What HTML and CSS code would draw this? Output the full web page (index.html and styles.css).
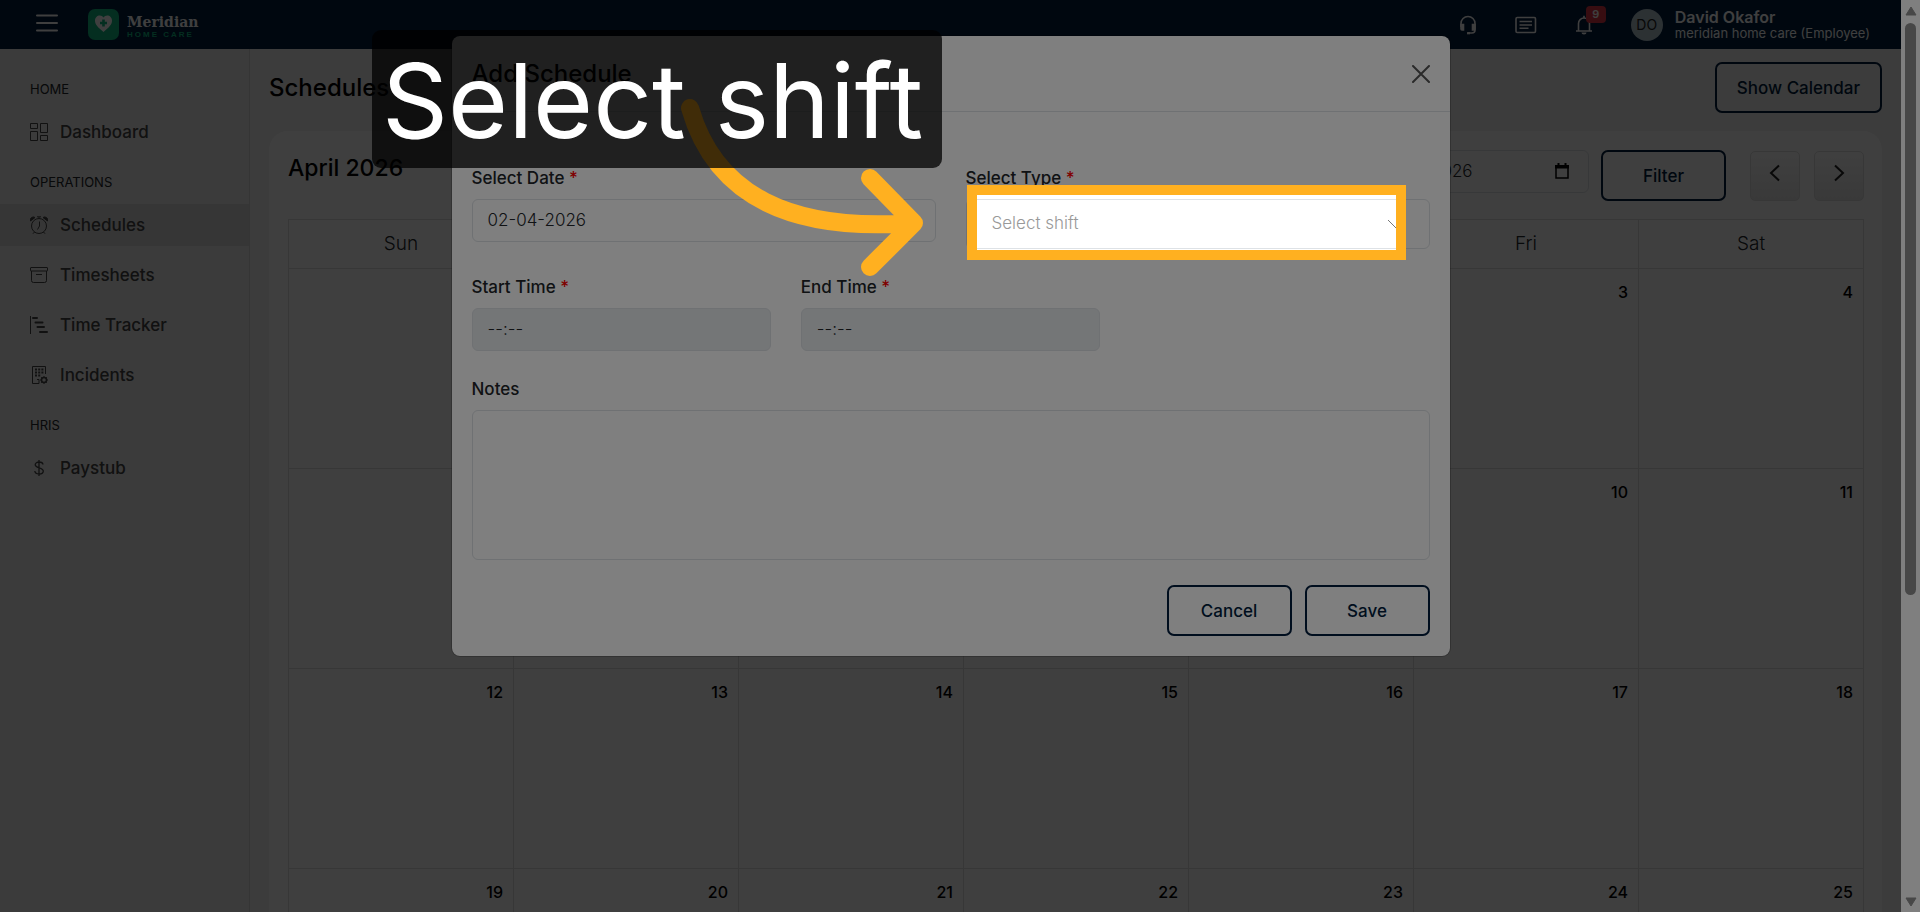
FILE: index.html
```html
<!DOCTYPE html>
<html lang="en">
  <head>
    <meta charset="UTF-8" />
    <meta name="viewport" content="width=device-width, initial-scale=1.0" />
    <title>Schedules</title>
    <link rel="stylesheet" href="styles.css">
  </head>
  <body>
    <div class="app">
      <!-- Top bar -->
      <header class="topbar">
        <button type="button" class="menu-button" aria-label="Menu">
          <svg width="22" height="18" viewBox="0 0 22 18"><path d="M1 1.5h20M1 9h20M1 16.5h20" stroke="#fff" stroke-width="2" stroke-linecap="round"/></svg>
        </button>
        <div class="logo">
          <svg width="31" height="31" viewBox="0 0 31 31">
            <rect width="31" height="31" rx="7" fill="#10b981"/>
            <path d="M15.500 23C10 18.500 7 15.500 7 11.800C7 8.500 9.200 6.500 11.800 6.500c1.600 0 2.900.8 3.700 1.900c.8-1.100 2.100-1.900 3.700-1.900c2.600 0 4.800 2 4.800 5.300c0 3.700-3 6.700-8.500 11.200z" fill="#fff"/>
            <path d="M15.500 10.500v7M12 14h7" stroke="#10b981" stroke-width="2.600"/>
          </svg>
          <div class="logo-text">
            <span class="logo-name">Meridian</span>
            <span class="logo-sub">HOME CARE</span>
          </div>
        </div>
        <div class="topbar-right">
          <svg class="icon-headset" width="18" height="20" viewBox="0 0 18 20" fill="none" stroke="#fff" stroke-width="1.600">
            <path d="M2 12V8.500a7 7 0 0 1 14 0V15q0 3-3 3H9"/>
            <path d="M2 9.500h2.500v5.500H3a1 1 0 0 1-1-1zM16 9.500h-2.500v5.500H15a1 1 0 0 0 1-1z" fill="#fff"/>
            <path d="M8 18.200h3" stroke-width="2.200"/>
          </svg>
          <svg class="icon-list" width="22" height="18" viewBox="0 0 22 18" fill="none" stroke="#fff" stroke-width="1.600">
            <rect x="1" y="1.500" width="19.500" height="15" rx="1.200"/>
            <path d="M4.500 5.500h12.500M4.500 9h12.500M4.500 12.300h9"/>
          </svg>
          <div class="bell">
            <svg width="18" height="20" viewBox="0 0 18 20" fill="none" stroke="#fff" stroke-width="1.600">
              <path d="M1 16h16M3.500 16V8.500a5.500 5.500 0 0 1 11 0V16M9 3V.8"/>
              <path d="M6.500 17.500h5a2.500 2 0 0 1-5 0z" fill="#fff" stroke="none"/>
            </svg>
            <span class="badge">9</span>
          </div>
          <div class="avatar">DO</div>
          <div class="user">
            <strong>David Okafor</strong>
            <span>meridian home care (Employee)</span>
          </div>
        </div>
      </header>

      <div class="main">
        <nav class="sidebar">
          <h3>HOME</h3>
          <a href="#">
            <svg width="18" height="18" viewBox="0 0 18 18" fill="none" stroke="currentColor"><path d="M.5.500h7v5h-7zM10.500.500h7v9h-7zM.5 8.500h7v9h-7zM10.500 12.500h7v5h-7z"/></svg>
            Dashboard
          </a>
          <h3>OPERATIONS</h3>
          <a href="#" class="active">
            <svg width="18" height="18" viewBox="0 0 18 18" fill="none" stroke="currentColor"><circle cx="9" cy="10" r="7.500"/><path d="M9.500 5.500V10L7.500 13.500M7 .8h4M9 1v1.500M4.500 16l-1.500 1.700M13.500 16l1.500 1.700"/><path d="M.5 5A3 3 0 0 1 5 1.500zM17.500 5A3 3 0 0 0 13 1.500z" fill="currentColor"/></svg>
            Schedules
          </a>
          <a href="#">
            <svg width="18" height="18" viewBox="0 0 18 18" fill="none" stroke="currentColor"><rect x=".5" y="1.500" width="17" height="3.500" rx=".5"/><path d="M1.500 5v9.500a2 2 0 0 0 2 2h11a2 2 0 0 0 2-2V5M6 8.500h6"/></svg>
            Timesheets
          </a>
          <a href="#">
            <svg width="18" height="18" viewBox="0 0 18 18" fill="none" stroke="currentColor"><path d="M.5 0v18"/><path d="M3 2h4M5.500 6.500h7M7.500 11h6.500M10 16h7" stroke-width="2" stroke-linecap="round"/></svg>
            Time Tracker
          </a>
          <a href="#">
            <svg width="18" height="18" viewBox="0 0 18 18" fill="none" stroke="currentColor"><path d="M15.500 8V.500h-13v17h6.500v-4H7"/><path d="M5 3.500h8.500M5 6.500h8.500M5 9.500h6" stroke-width="2" stroke-dasharray="2 1.200"/><circle cx="14" cy="14" r="2.500" stroke-width="1.500"/><path d="M14 10v1.500M14 16.500V18M10 14h1.500M16.500 14H18M11.200 11.200l1 1M15.800 15.800l1 1M16.800 11.200l-1 1M12.200 15.800l-1 1"/></svg>
            Incidents
          </a>
          <h3>HRIS</h3>
          <a href="#">
            <svg width="18" height="18" viewBox="0 0 18 18" fill="none" stroke="currentColor" stroke-width="1.300"><path d="M9 1v16M13 5.500C12.800 4 11.300 3 9.200 3S5.200 4.200 5.200 5.800C5.200 9.500 13.300 8 13.300 12c0 1.700-1.700 3-4.200 3S5 13.800 4.800 12"/></svg>
            Paystub
          </a>
        </nav>

        <div class="content">
          <div class="page-head">
            <h1>Schedules</h1>
            <button type="button" class="button">Show Calendar</button>
          </div>

          <div class="card">
            <div class="card-head">
              <h2>April 2026</h2>
              <div class="filters">
                <div class="date-filter">
                  <input type="text" class="input" aria-label="Date" value="02-04-2026" />
                  <svg width="14" height="16" viewBox="0 0 14 16"><path d="M1 3h12v12H1z" fill="none" stroke="#000" stroke-width="1.500"/><path d="M0 2h14v3.500H0zM2.500 0h2v2h-2zM9.500 0h2v2h-2z"/></svg>
                </div>
                <button type="button" class="button">Filter</button>
              </div>
              <div class="pager">
                <button type="button" aria-label="Previous"><svg width="12" height="18" viewBox="0 0 12 18"><path d="M10 1.500L2 9l8 7.500"/></svg></button>
                <button type="button" aria-label="Next"><svg width="12" height="18" viewBox="0 0 12 18"><path d="M2 1.500L10 9l-8 7.500"/></svg></button>
              </div>
            </div>

            <table class="calendar">
              <thead>
                <tr><th>Sun</th><th>Mon</th><th>Tue</th><th>Wed</th><th>Thu</th><th>Fri</th><th>Sat</th></tr>
              </thead>
              <tbody>
                <tr><td></td><td></td><td></td><td>1</td><td>2</td><td>3</td><td>4</td></tr>
                <tr><td>5</td><td>6</td><td>7</td><td>8</td><td>9</td><td>10</td><td>11</td></tr>
                <tr><td>12</td><td>13</td><td>14</td><td>15</td><td>16</td><td>17</td><td>18</td></tr>
                <tr><td>19</td><td>20</td><td>21</td><td>22</td><td>23</td><td>24</td><td>25</td></tr>
              </tbody>
            </table>
          </div>
        </div>
      </div>

      <!-- Add Schedule modal -->
      <div class="backdrop">
        <form class="modal">
          <div class="modal-head">
            <h2>Add Schedule</h2>
            <button type="button" class="close" aria-label="Close">
              <svg width="18" height="18" viewBox="0 0 18 18"><path d="M1 1l16 16M17 1L1 17" stroke="#555" stroke-width="2" stroke-linecap="round"/></svg>
            </button>
          </div>
          <div class="modal-body">
            <div class="row two">
              <div class="field">
                <label for="date">Select Date <span>*</span></label>
                <input type="text" id="date" class="input" value="02-04-2026" />
              </div>
              <div class="field">
                <label for="type">Select Type <span>*</span></label>
                <div class="select">
                  <select id="type"><option>Select shift</option></select>
                  <svg width="18" height="10" viewBox="0 0 18 10"><path d="M1 1l8 8 8-8" fill="none" stroke="#777"/></svg>
                </div>
              </div>
            </div>
            <div class="row three">
              <div class="field">
                <label for="start">Start Time <span>*</span></label>
                <input type="text" id="start" class="input" value="--:--" disabled />
              </div>
              <div class="field">
                <label for="end">End Time <span>*</span></label>
                <input type="text" id="end" class="input" value="--:--" disabled />
              </div>
            </div>
            <div class="field">
              <label for="notes">Notes</label>
              <textarea id="notes" class="input"></textarea>
            </div>
          </div>
          <div class="modal-foot">
            <button type="button" class="button">Cancel</button>
            <button type="submit" class="button">Save</button>
          </div>
        </form>
      </div>
    </div>

    <div class="scrollbar">
      <svg width="12" height="10" viewBox="0 0 12 10"><path d="M6 1l5 8H1z" fill="#8f8f8f" stroke="#8f8f8f" stroke-linejoin="round"/></svg>
      <div class="track"><div class="thumb"></div></div>
      <svg width="12" height="10" viewBox="0 0 12 10"><path d="M6 9l5-8H1z" fill="#8f8f8f" stroke="#8f8f8f" stroke-linejoin="round"/></svg>
    </div>

    <!-- Guided tour step -->
    <div class="tour">
      <div class="spotlight"></div>
      <svg class="arrow" width="260" height="200" viewBox="670 90 260 200" fill="none" stroke="#ffb020" stroke-width="18" stroke-linecap="round" stroke-linejoin="round">
        <path d="M690 108C715 195 790 232 912 223M870 178L914 223L870 267"/>
      </svg>
      <div class="tour-text">Select shift</div>
    </div>
  </body>
</html>
```
FILE: styles.css
```css
* {
  box-sizing: border-box;
}

body {
  margin: 0;
  height: 100vh;
  display: flex;
  overflow: hidden;
  font-family: Inter, "Liberation Sans", sans-serif;
  font-size: 16px;
  line-height: 24px;
  color: #212529;
}

h1,
h2,
h3 {
  margin: 0;
  font-weight: 500;
}

h1,
h2 {
  font-size: 24px;
  line-height: 32px;
  color: #000;
}

button,
input,
select,
textarea {
  font: inherit;
  color: inherit;
}

button {
  cursor: pointer;
}

.app {
  position: relative;
  flex: 1;
  min-width: 0;
  display: flex;
  flex-direction: column;
  overflow: hidden;
}

/* Top bar */
.topbar {
  height: 49px;
  flex: none;
  display: flex;
  align-items: center;
  padding: 0 31px 0 36px;
  background-color: #001c3d;
  color: #fff;
}

.menu-button {
  display: flex;
  padding: 0 0 4px;
  border: none;
  background: none;
}

.logo {
  display: flex;
  align-items: center;
  gap: 8px;
  margin-left: 30px;
}

.logo-text {
  display: flex;
  flex-direction: column;
  padding-top: 4px;
}

.logo-name {
  font-family: "DejaVu Serif", serif;
  font-size: 14px;
  font-weight: bold;
  line-height: 16px;
}

.logo-sub {
  font-family: "Liberation Sans", sans-serif;
  font-size: 8px;
  font-weight: bold;
  line-height: 10px;
  letter-spacing: 2px;
  color: #10b981;
}

.topbar-right {
  display: flex;
  align-items: center;
  margin-left: auto;
}

.icon-list {
  margin: 0 38px;
}

.bell {
  position: relative;
  display: flex;
}

.badge {
  position: absolute;
  top: -9px;
  left: 11px;
  width: 20px;
  height: 17px;
  border-radius: 4px;
  background-color: #dc3545;
  font-size: 11px;
  font-weight: 600;
  line-height: 17px;
  text-align: center;
}

.avatar {
  width: 32px;
  height: 32px;
  margin: 0 12px 0 38px;
  border-radius: 50%;
  background-color: #b0c4ce;
  color: #222;
  font-size: 14px;
  line-height: 32px;
  text-align: center;
}

.user {
  display: flex;
  flex-direction: column;
  font-size: 13px;
  line-height: 16px;
}

.user strong {
  font-size: 16px;
  font-weight: 600;
}

.main {
  flex: 1;
  min-height: 0;
  display: flex;
}

/* Sidebar */
.sidebar {
  width: 250px;
  flex: none;
  padding-top: 19px;
  border-right: 1px solid #d4d4d4;
  background-color: #ececec;
}

.sidebar h3 {
  padding: 0 30px;
  font-size: 13px;
  font-weight: 400;
  line-height: 43px;
}

.sidebar a {
  height: 42px;
  display: flex;
  align-items: center;
  gap: 12px;
  margin-bottom: 8px;
  padding: 0 30px;
  font-size: 17px;
  font-weight: 500;
  color: #444;
  text-decoration: none;
}

.sidebar a.active {
  background-color: #dadada;
}

/* Page */
.content {
  flex: 1;
  min-width: 0;
  padding: 13px 19px;
  background-color: #f2f2f2;
  overflow: hidden;
}

.page-head {
  display: flex;
  align-items: center;
  justify-content: space-between;
}

.button {
  min-width: 125px;
  height: 51px;
  padding: 0 20px;
  border: 2px solid #001c3d;
  border-radius: 7px;
  background-color: transparent;
  color: #001c3d;
  font-size: 17px;
  font-weight: 500;
}

.card {
  margin-top: 18px;
  padding: 19px 18px 19px 19px;
  border-radius: 19px;
  background-color: #fff;
}

.card-head {
  display: flex;
  align-items: flex-start;
  margin-bottom: 18px;
}

.card-head h2 {
  margin-right: auto;
  padding-top: 2px;
  font-size: 23px;
}

.filters {
  display: flex;
  align-items: flex-start;
  gap: 12px;
  margin-right: 24px;
}

.date-filter {
  position: relative;
  width: 231px;
}

.date-filter svg {
  position: absolute;
  top: 13px;
  right: 20px;
}

.pager {
  display: flex;
  gap: 14px;
  padding-top: 1px;
}

.pager button {
  width: 50px;
  height: 50px;
  border: 1px solid #ddd;
  border-radius: 5px;
  background: linear-gradient(#fff, #e6e6e6);
}

.pager path {
  fill: none;
  stroke: #222;
  stroke-width: 2;
}

.calendar {
  width: 100%;
  table-layout: fixed;
  border-collapse: collapse;
}

.calendar th,
.calendar td {
  border: 1px solid #dcdcdc;
}

.calendar th {
  height: 49px;
  padding: 0;
  font-size: 19px;
  font-weight: 300;
}

.calendar td {
  height: 200px;
  padding: 11px 10px;
  color: #000;
  font-weight: 500;
  text-align: right;
  vertical-align: top;
}

/* Form controls */
.input {
  display: block;
  width: 100%;
  height: 43px;
  padding: 0 15px 2px;
  border: 1px solid #dee2e6;
  border-radius: 6px;
  background-color: #fff;
  font-size: 17px;
  font-weight: 300;
}

.input:disabled {
  background-color: #e9ecef;
}

textarea.input {
  height: 150px;
  padding: 10px 15px;
  resize: none;
}

/* Modal */
.backdrop {
  position: absolute;
  inset: 0;
  padding-top: 35px;
  background-color: rgba(0, 0, 0, 0.5);
}

.modal {
  max-width: 1000px;
  margin: 0 auto;
  border: 1px solid rgba(0, 0, 0, 0.2);
  border-radius: 9px;
  background-color: #fff;
  background-clip: padding-box;
}

.modal-head {
  height: 76px;
  display: flex;
  align-items: center;
  justify-content: space-between;
  padding: 0 20px;
  border-bottom: 1px solid #dee2e6;
}

.close {
  display: flex;
  padding: 0;
  border: none;
  background: none;
}

.modal-body {
  display: flex;
  flex-direction: column;
  gap: 26px;
  padding: 54px 20px 0;
}

.row {
  display: grid;
  gap: 30px;
}

.two {
  grid-template-columns: 1fr 1fr;
}

.three {
  grid-template-columns: 1fr 1fr 1fr;
}

.field label {
  display: block;
  margin-bottom: 9px;
  font-size: 17px;
  font-weight: 500;
}

.field label span {
  color: #f00;
}

.select {
  position: relative;
}

.select select {
  width: 100%;
  height: 50px;
  padding: 0 25px 2px;
  border: 1px solid #dee2e6;
  border-radius: 6px;
  background-color: #fff;
  color: #999;
  font-size: 17px;
  font-weight: 300;
  appearance: none;
}

.select svg {
  position: absolute;
  top: 20px;
  right: 25px;
  pointer-events: none;
}

.modal-foot {
  display: flex;
  justify-content: flex-end;
  gap: 13px;
  padding: 25px 20px 20px;
}

/* Scrollbar */
.scrollbar {
  width: 19px;
  flex: none;
  display: flex;
  flex-direction: column;
  align-items: center;
  padding: 6px 0 5px;
  background-color: #fff;
}

.track {
  flex: 1;
  padding: 7px 0;
}

.thumb {
  width: 11px;
  height: 66%;
  border-radius: 6px;
  background-color: #8f8f8f;
}

/* Tour layer */
.tour {
  position: fixed;
  inset: 0;
  overflow: hidden;
  pointer-events: none;
}

.spotlight {
  position: absolute;
  top: 185px;
  left: 967px;
  width: 439px;
  height: 75px;
  border: 10px solid #ffb020;
  box-shadow: 0 0 0 2000px rgba(0, 0, 0, 0.5);
}

.arrow {
  position: absolute;
  top: 90px;
  left: 670px;
}

.tour-text {
  position: absolute;
  top: 30px;
  left: 372px;
  width: 570px;
  height: 138px;
  padding-left: 10px;
  border-radius: 9px;
  background-color: rgba(0, 0, 0, 0.75);
  color: #fff;
  font-size: 103px;
  line-height: 142px;
  white-space: nowrap;
}
```
